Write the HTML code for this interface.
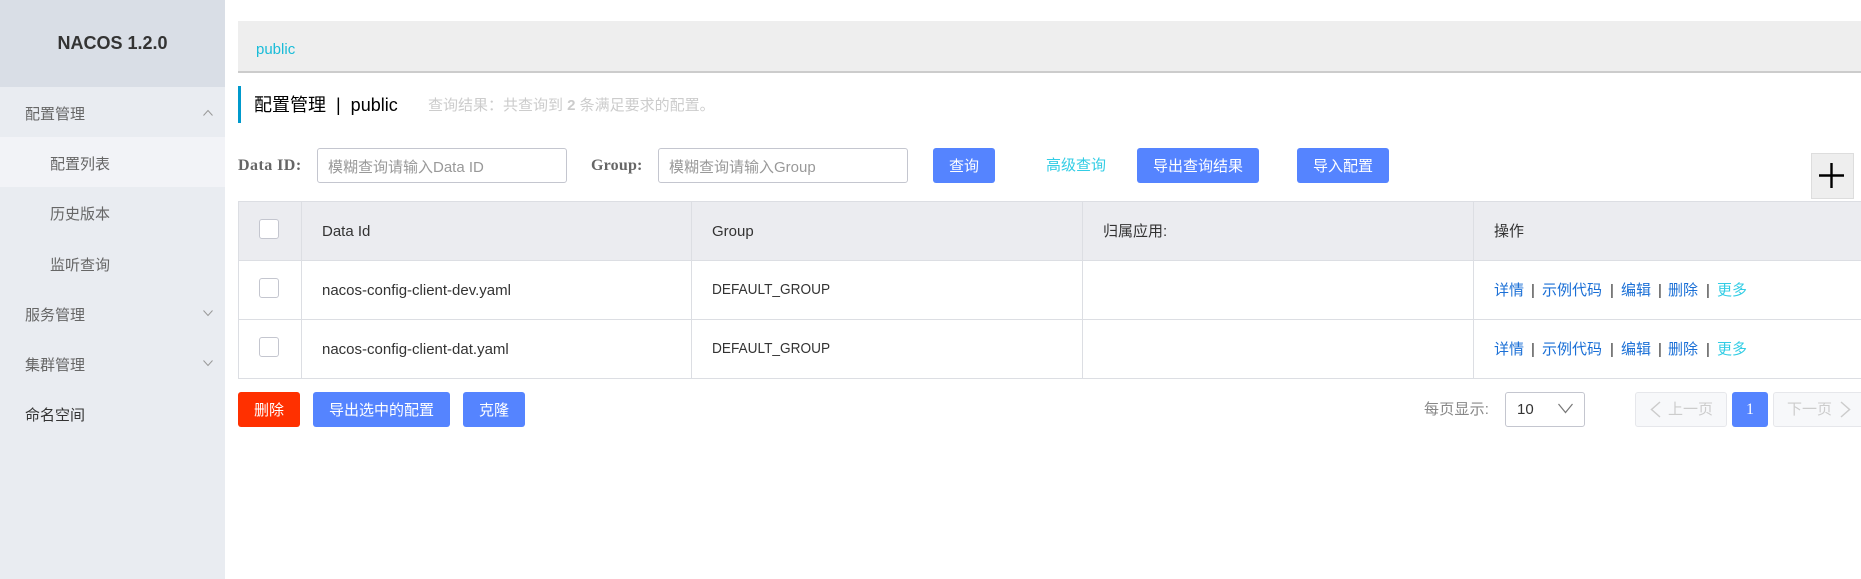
<!DOCTYPE html>
<html lang="zh"><head><meta charset="utf-8"><title>NACOS</title>
<style>
html,body{margin:0;padding:0;width:1861px;height:579px;overflow:hidden;background:#fff}
body{position:relative;font-family:"Liberation Sans","Noto Sans CJK SC",sans-serif;font-size:15px;color:#333}
.a{position:absolute;white-space:pre}
.t{position:absolute;white-space:pre;line-height:20px;height:20px}
.btn{position:absolute;top:148px;height:35px;line-height:37px;background:#5584ff;color:#fff;border-radius:3px;text-align:center;font-size:15px}
.ln{position:absolute;background:#dcdee3}
.inp{position:absolute;top:148px;height:33px;width:248px;border:1px solid #c4c6cf;border-radius:3px;background:#fff;line-height:37px;color:#999}
.cb{position:absolute;left:259px;width:18px;height:18px;border:1px solid #c4c6cf;border-radius:3px;background:#fff}
.m{position:absolute;width:225px;height:50px;line-height:50px;color:#666}
.g{transform:scaleX(.91);transform-origin:0 50%}
svg{position:absolute;overflow:visible}
.lk{color:#1a6fd6}.sp{color:#333}.mo{color:#33cde5}
</style></head><body>

<div class="a" style="left:0;top:0;width:225px;height:579px;background:#e9ecf1"></div>
<div class="a" style="left:0;top:0;width:225px;height:87px;background:#d9dee6"></div>
<div class="a" style="left:0;top:33px;width:225px;text-align:center;font-weight:bold;font-size:18px;line-height:20px;color:#333">NACOS 1.2.0</div>
<div class="a" style="left:0;top:137px;width:225px;height:50px;background:#f2f3f7"></div>
<div class="m" style="left:0;top:90px;text-indent:25px;height:50px">配置管理</div>
<div class="m" style="left:0;top:140px;text-indent:50px">配置列表</div>
<div class="m" style="left:0;top:190px;text-indent:50px">历史版本</div>
<div class="m" style="left:0;top:241px;text-indent:50px">监听查询</div>
<div class="m" style="left:0;top:291px;text-indent:25px">服务管理</div>
<div class="m" style="left:0;top:341px;text-indent:25px">集群管理</div>
<div class="m" style="left:0;top:391px;text-indent:25px;color:#333">命名空间</div>
<svg style="left:203px;top:109px" width="10" height="8"><path d="M0.5 6.5L5 1.5L9.5 6.5" fill="none" stroke="#999" stroke-width="1"/></svg>
<svg style="left:203px;top:309px" width="10" height="8"><path d="M0.5 1.5L5 6.5L9.5 1.5" fill="none" stroke="#999" stroke-width="1"/></svg>
<svg style="left:203px;top:359px" width="10" height="8"><path d="M0.5 1.5L5 6.5L9.5 1.5" fill="none" stroke="#999" stroke-width="1"/></svg>

<div class="a" style="left:238px;top:21px;width:1623px;height:50px;background:#eee;border-bottom:2px solid #ccc"></div>
<div class="t" style="left:256px;top:40px;color:#19bcd8;font-size:15px">public</div>

<div class="a" style="left:238px;top:86px;width:3px;height:37px;background:#09c"></div>
<div class="t" style="left:254px;top:94px;font-size:18px;line-height:22px;height:22px;color:#000">配置管理  |  public</div>
<div class="t" style="left:428px;top:96px;color:#ccc">查询结果：共查询到 <b>2</b> 条满足要求的配置。</div>

<div class="t" style="left:238px;top:156px;color:#666;font-weight:bold;font-family:'Liberation Serif',serif;font-size:16px;letter-spacing:.45px">Data ID:</div>
<div class="inp" style="left:317px"><span class="a" style="left:10px">模糊查询请输入Data ID</span></div>
<div class="t" style="left:591px;top:156px;color:#666;font-weight:bold;font-family:'Liberation Serif',serif;font-size:16px;letter-spacing:.2px">Group:</div>
<div class="inp" style="left:658px"><span class="a" style="left:10px">模糊查询请输入Group</span></div>
<div class="btn" style="left:933px;width:62px">查询</div>
<div class="t" style="left:1046px;top:156px;color:#33cde5">高级查询</div>
<div class="btn" style="left:1137px;width:122px">导出查询结果</div>
<div class="btn" style="left:1297px;width:92px">导入配置</div>

<div class="a" style="left:1811px;top:153px;width:41px;height:44px;background:#eee;border:1px solid #ddd"></div>
<svg style="left:1819px;top:163px" width="26" height="26"><path d="M0 12.5H25M12.5 0V25" stroke="#000" stroke-width="2.4" fill="none"/></svg>

<div class="a" style="left:238px;top:201px;width:1623px;height:59px;background:#ebecf0"></div>
<div class="ln" style="left:238px;top:201px;width:1623px;height:1px"></div>
<div class="ln" style="left:238px;top:260px;width:1623px;height:1px"></div>
<div class="ln" style="left:238px;top:319px;width:1623px;height:1px"></div>
<div class="ln" style="left:238px;top:378px;width:1623px;height:1px"></div>
<div class="ln" style="left:238px;top:201px;width:1px;height:178px"></div>
<div class="ln" style="left:301px;top:201px;width:1px;height:178px"></div>
<div class="ln" style="left:691px;top:201px;width:1px;height:178px"></div>
<div class="ln" style="left:1082px;top:201px;width:1px;height:178px"></div>
<div class="ln" style="left:1473px;top:201px;width:1px;height:178px"></div>

<div class="cb" style="top:219px"></div>
<div class="cb" style="top:278px"></div>
<div class="cb" style="top:337px"></div>

<div class="t" style="left:322px;top:222px">Data Id</div>
<div class="t" style="left:712px;top:222px">Group</div>
<div class="t" style="left:1103px;top:222px">归属应用:</div>
<div class="t" style="left:1494px;top:222px">操作</div>

<div class="t" style="left:322px;top:281px">nacos-config-client-dev.yaml</div>
<div class="t g" style="left:712px;top:280px">DEFAULT_GROUP</div>
<div class="t" style="left:322px;top:340px">nacos-config-client-dat.yaml</div>
<div class="t g" style="left:712px;top:339px">DEFAULT_GROUP</div>

<div class="t lk" style="left:1494px;top:281px">详情</div><div class="t sp" style="left:1531px;top:281px">|</div>
<div class="t lk" style="left:1542px;top:281px">示例代码</div><div class="t sp" style="left:1610px;top:281px">|</div>
<div class="t lk" style="left:1621px;top:281px">编辑</div><div class="t sp" style="left:1658px;top:281px">|</div>
<div class="t lk" style="left:1668px;top:281px">删除</div><div class="t sp" style="left:1706px;top:281px">|</div>
<div class="t mo" style="left:1717px;top:281px">更多</div>

<div class="t lk" style="left:1494px;top:340px">详情</div><div class="t sp" style="left:1531px;top:340px">|</div>
<div class="t lk" style="left:1542px;top:340px">示例代码</div><div class="t sp" style="left:1610px;top:340px">|</div>
<div class="t lk" style="left:1621px;top:340px">编辑</div><div class="t sp" style="left:1658px;top:340px">|</div>
<div class="t lk" style="left:1668px;top:340px">删除</div><div class="t sp" style="left:1706px;top:340px">|</div>
<div class="t mo" style="left:1717px;top:340px">更多</div>

<div class="btn" style="left:238px;top:392px;width:62px;background:#ff3000">删除</div>
<div class="btn" style="left:313px;top:392px;width:137px">导出选中的配置</div>
<div class="btn" style="left:463px;top:392px;width:62px">克隆</div>

<div class="t" style="left:1424px;top:400px;color:#888;letter-spacing:.2px">每页显示:</div>
<div class="a" style="left:1505px;top:392px;width:78px;height:33px;border:1px solid #c4c6cf;border-radius:3px"></div>
<div class="t" style="left:1517px;top:400px;color:#333">10</div>
<svg style="left:1558px;top:403px" width="15" height="10"><path d="M0.5 1L7.5 9.5L14.5 1" fill="none" stroke="#777" stroke-width="1.2"/></svg>

<div class="a" style="left:1635px;top:392px;width:90px;height:33px;background:#f7f8fa;border:1px solid #e6e7eb;border-radius:3px"></div>
<svg style="left:1650px;top:401px" width="11" height="17"><path d="M10 1L1.5 8.5L10 16" fill="none" stroke="#ccc" stroke-width="1.5"/></svg>
<div class="t" style="left:1668px;top:400px;color:#ccc">上一页</div>
<div class="btn" style="left:1732px;top:392px;width:36px;font-family:'Liberation Serif',serif;font-size:16px;line-height:35px">1</div>
<div class="a" style="left:1773px;top:392px;width:100px;height:33px;background:#f7f8fa;border:1px solid #e6e7eb;border-radius:3px"></div>
<div class="t" style="left:1787px;top:400px;color:#ccc">下一页</div>
<svg style="left:1840px;top:401px" width="11" height="17"><path d="M1 1L9.5 8.5L1 16" fill="none" stroke="#ccc" stroke-width="1.5"/></svg>
</body></html>
